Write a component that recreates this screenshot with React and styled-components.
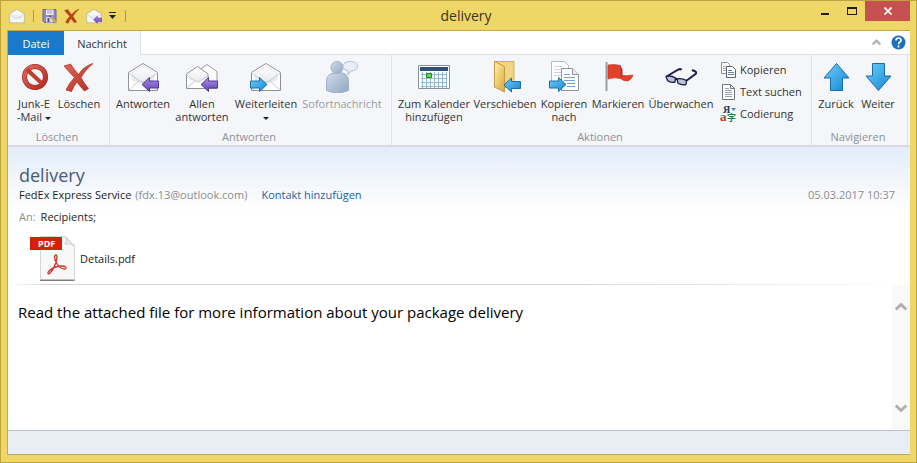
import React from "react"
import styled, { createGlobalStyle } from "styled-components"

const GlobalStyle = createGlobalStyle`
  * {
    box-sizing: border-box;
  }
  body {
    margin: 0;
    font-family: "Open Sans", "Noto Sans", sans-serif;
    font-size: 11px;
    color: #1c1c1c;
  }
  button {
    font: inherit;
    color: inherit;
    background: none;
    border: 0;
    padding: 0;
  }
`

const Window = styled.div`
  display: flex;
  flex-direction: column;
  min-height: 100vh;
  padding: 0 6px 7px 6px;
  background: #efd767;
  border: 1px solid #bda440;
`

const TitleBar = styled.header`
  display: flex;
  align-items: center;
  height: 29px;
  flex: none;
`

const QuickAccess = styled.div`
  display: flex;
  align-items: center;
  gap: 6px;
  width: 118px;
  padding-left: 2px;
`

const QuickButton = styled.button`
  display: flex;
  flex: none;
  width: ${(props) => props.$width || 16}px;
`

const QuickDivider = styled.span`
  flex: none;
  width: 1px;
  height: 12px;
  margin: 0 2px;
  background: #b39b45;
`

const Title = styled.h1`
  flex: 1;
  margin: 0;
  padding-right: 4px;
  text-align: center;
  font-size: 14px;
  font-weight: 400;
  line-height: 20px;
  color: #3a3520;
`

const WindowControls = styled.div`
  display: flex;
  align-self: flex-start;
`

const WindowButton = styled.button`
  display: flex;
  align-items: center;
  justify-content: center;
  width: ${(props) => (props.$close ? 45 : 27)}px;
  height: 20px;
  background: ${(props) => (props.$close ? "#c75050" : "transparent")};
`

const Content = styled.div`
  display: flex;
  flex-direction: column;
  flex: 1;
  border: 1px solid #c0a94e;
  border-right-width: 0;
  background: #fff;
`

const Tabs = styled.nav`
  display: flex;
  align-items: stretch;
  height: 24px;
  border-bottom: 1px solid #dcdfe4;
`

const Tab = styled.button`
  height: 24px;
  width: ${(props) => (props.$primary ? 56 : 77)}px;
  color: ${(props) => (props.$primary ? "#fff" : "#333")};
  background: ${(props) => (props.$primary ? "#1979ca" : "#f5f6f9")};
  border-right: ${(props) => (props.$primary ? "0" : "1px solid #dcdfe4")};
`

const TabTools = styled.div`
  display: flex;
  align-items: center;
  gap: 10px;
  margin-left: auto;
  padding-right: 4px;

  button {
    display: flex;
  }
`

const Ribbon = styled.div`
  display: flex;
  height: 92px;
  background: #f5f6f9;
  border-bottom: 2px solid #d6dae1;
`

const Group = styled.section`
  display: flex;
  flex-direction: column;
  justify-content: space-between;
  padding: 6px 7px 1px 4px;
  border-right: 1px solid #e0e2e6;
`

const GroupItems = styled.div`
  display: flex;
  align-items: flex-start;
`

const GroupName = styled.h2`
  margin: 0;
  text-align: center;
  font-size: 11px;
  font-weight: 400;
  line-height: 14px;
  color: #8d9096;
`

const RibbonButton = styled.button`
  display: flex;
  flex-direction: column;
  align-items: center;
  gap: 4px;
  width: ${(props) => props.$width}px;
  line-height: 13px;
  white-space: nowrap;
  color: ${(props) => (props.disabled ? "#989ba0" : "#333")};
`

const SmallList = styled.div`
  display: flex;
  flex-direction: column;
  width: 88px;
  padding-left: 4px;
`

const SmallButton = styled.button`
  display: flex;
  align-items: center;
  gap: 4px;
  height: 22px;
  padding-bottom: 5px;
  white-space: nowrap;
  color: #333;
`

const Caret = styled.span`
  display: inline-block;
  margin-left: ${(props) => (props.$spaced ? 3 : 0)}px;
  vertical-align: middle;
  border: 3px solid transparent;
  border-top-color: #222;
  border-bottom: 0;
`

const MessageHeader = styled.section`
  padding: 16px 15px 3px 11px;
  background: linear-gradient(#e3ecf8, #fff 64px);
`

const Subject = styled.h2`
  margin: 0;
  font-size: 18px;
  font-weight: 400;
  line-height: 24px;
  color: #475a78;
`

const Line = styled.div`
  display: flex;
  line-height: 16px;
  margin-bottom: 6px;
`

const Muted = styled.span`
  margin: 0 4px;
  color: #8d8d8d;
`

const Label = styled.span`
  margin-right: 5px;
  color: #8d8d8d;
`

const ContactLink = styled.a`
  margin-left: 10px;
  color: #1c62a5;
  text-decoration: none;
`

const DateText = styled.time`
  margin-left: auto;
  color: #8d8d8d;
`

const Attachment = styled.button`
  display: flex;
  align-items: center;
  gap: 4px;
  margin: 10px 0 0 11px;
`

const Divider = styled.hr`
  width: 100%;
  height: 1px;
  margin: 0;
  border: 0;
  background: linear-gradient(90deg, #fff, #d3d5d9 40px, #d3d5d9 60%, #fff);
`

const Body = styled.section`
  display: flex;
  flex: 1;
`

const BodyText = styled.p`
  flex: 1;
  margin: 0;
  padding: 16px 0 0 10px;
  font-size: 15px;
  line-height: 22px;
  color: #000;
`

const ScrollBar = styled.div`
  display: flex;
  flex-direction: column;
  justify-content: space-between;
  align-items: center;
  width: 18px;
  padding: 16px 0;
  background: #f9f9fa;

  button {
    display: flex;
  }
`

const StatusBar = styled.footer`
  height: 24px;
  background: #e9edf4;
  border-top: 1px solid #bcc1c8;
`

const Icon = ({ size = 32, children }) => (
  <svg width={size} height={size} viewBox="0 0 32 32" aria-hidden="true">
    {children}
  </svg>
)

const Gradients = () => (
  <svg width="0" height="0" style={{ position: "absolute" }} aria-hidden="true">
    <defs>
      <linearGradient id="blue" x1="0" y1="0" x2="1" y2="1">
        <stop offset="0" stopColor="#6fd0fa" />
        <stop offset="1" stopColor="#1483d2" />
      </linearGradient>
      <linearGradient id="purple" x1="0" y1="0" x2="0" y2="1">
        <stop offset="0" stopColor="#a78fe6" />
        <stop offset="1" stopColor="#6542b4" />
      </linearGradient>
      <linearGradient id="red" x1="0" y1="0" x2="1" y2="1">
        <stop offset="0" stopColor="#e2685c" />
        <stop offset="1" stopColor="#b22a1d" />
      </linearGradient>
      <linearGradient id="folder" x1="0" y1="0" x2="1" y2="1">
        <stop offset="0" stopColor="#fff0ac" />
        <stop offset="1" stopColor="#dca93c" />
      </linearGradient>
      <linearGradient id="person" x1="0" y1="0" x2="1" y2="1">
        <stop offset="0" stopColor="#d3dde9" />
        <stop offset="1" stopColor="#8fa6c4" />
      </linearGradient>
      <linearGradient id="paper" x1="0" y1="0" x2="0" y2="1">
        <stop offset="0" stopColor="#ffffff" />
        <stop offset="1" stopColor="#e6e8ec" />
      </linearGradient>
    </defs>
  </svg>
)

const Envelope = () => (
  <g stroke="#8f9196" strokeLinejoin="round">
    <path d="M1.5 11.5 16 2.5l14.5 9v18h-29z" fill="#fff" />
    <path d="M5 12 16 5l11 7v7l-11 3-11-3z" fill="url(#paper)" stroke="#e4e6e9" />
    <path d="m1.5 12 11 8q3.500 2 7 0l11-8M1.500 29.500 12 20m18.500 9.500L20 20" fill="none" stroke="#c5c8cc" />
  </g>
)

const LeftArrow = ({ fill, stroke }) => (
  <path d="M15 23.500 22.500 16.500v3.500h9v7h-9v3.500z" fill={fill} stroke={stroke} strokeLinejoin="round" />
)

const RightArrow = () => (
  <path d="M17 23.500 9.500 16.500v3.500h-9v7h9v3.500z" fill="url(#blue)" stroke="#1b6fa9" strokeLinejoin="round" />
)

const EnvelopeIcon = ({ size }) => (
  <Icon size={size}>
    <Envelope />
  </Icon>
)

const ReplyIcon = ({ size }) => (
  <Icon size={size}>
    <Envelope />
    <LeftArrow fill="url(#purple)" stroke="#54379b" />
  </Icon>
)

const ReplyAllIcon = () => (
  <Icon>
    <path d="m12 10 9-6.500 10 7v17H14z" fill="#fbfbfc" stroke="#9b9da2" />
    <path d="m.5 13 11-7.500 10.500 7.500v14.500H.5z" fill="#fff" stroke="#8f9196" />
    <path d="m3.500 13 8-5.500 8 5.500v5l-8 3-8-3z" fill="url(#paper)" />
    <path d="m.5 14 8 6q3 2 6 0l8-6M.5 27l8-6.500" fill="none" stroke="#c5c8cc" />
    <LeftArrow fill="url(#purple)" stroke="#54379b" />
  </Icon>
)

const ForwardIcon = () => (
  <Icon>
    <Envelope />
    <RightArrow />
  </Icon>
)

const JunkIcon = () => (
  <Icon>
    <circle cx="17" cy="16" r="10.5" fill="none" stroke="#8f2118" strokeWidth="5" />
    <circle cx="17" cy="16" r="10.5" fill="none" stroke="url(#red)" strokeWidth="4" />
    <path d="m9 8.500 16 15" stroke="#c03c2e" strokeWidth="4" />
  </Icon>
)

const DeleteIcon = ({ size, fill = "url(#red)", stroke = "#a8281c" }) => (
  <Icon size={size}>
    <path
      d="M1 5 7.500 3q4 6 8 10.500Q21 5 30 2.500 22 9 18 16.500q3 6 7.500 11l-4 2.500q-4-4-7.500-9-3.500 4-5.500 9.500L3 29q3-7 8.500-12.500-6-6-10.500-11.500z"
      fill={fill}
      stroke={stroke}
      strokeWidth="0.7"
    />
  </Icon>
)

const SaveIcon = () => (
  <Icon size={16}>
    <path d="M2 3h26v26H5l-3-3z" fill="#9488bd" stroke="#6d62a0" strokeWidth="2" />
    <path d="M8 3h15v11H8z" fill="#f4f1fa" />
    <path d="M10 6h11M10 10h11" stroke="#8580a0" strokeWidth="1.5" />
    <path d="M8 18h14v11H8z" fill="#d8d6e8" />
    <path d="M11 20h4v8h-4z" fill="#5a5385" />
    <path d="m17 17 12 13" stroke="#c9a95c" strokeWidth="4" />
    <path d="m15 15 3 3" stroke="#6a5d48" strokeWidth="3" />
  </Icon>
)

const MessengerIcon = () => (
  <Icon>
    <path d="M6 12.500q6-3 12 0 4.500 2 4.500 8v9q-11 4.500-22 0v-9q0-6 5.500-8z" fill="url(#person)" stroke="#9bb0ca" />
    <circle cx="11" cy="6.5" r="6" fill="url(#person)" stroke="#9bb0ca" />
    <path d="M24 .5c4.500 0 7.500 2 7.500 4.700S28.500 10 25 10l-3 4v-4.300c-3-.7-5-2.200-5-4.500C17 2.500 20 .5 24 .5z" fill="#e8eff7" stroke="#adbfd3" />
  </Icon>
)

const CalendarIcon = () => (
  <Icon>
    <path d="M.5 4.500h31v23H.5z" fill="#fff" stroke="#8a9099" />
    <path d="M2 6h28v4H2z" fill="#304e78" />
    <path d="M3 13.500h26M3 17.500h26M3 21.500h26M3 25.500h26M4.500 11v16M8.500 11v16M12.500 11v16M16.500 11v16M20.500 11v16M24.500 11v16M28.500 11v16" stroke="#8fb9d6" />
    <path d="M8.500 12.500h5v4h-5z" fill="#68d552" stroke="#228b20" />
  </Icon>
)

const MoveIcon = () => (
  <Icon>
    <path d="M6 .5h19v26H6z" fill="#f0d682" stroke="#d3ac52" />
    <path d="m5.500.5 10 5v25.500l-10-5z" fill="url(#folder)" stroke="#c79d43" />
    <g transform="translate(0 .5)">
      <LeftArrow fill="url(#blue)" stroke="#1b6fa9" />
    </g>
  </Icon>
)

const CopyToIcon = () => (
  <Icon>
    <path d="M3.500.5h13l4 4v20h-17z" fill="#fff" stroke="#b5b9c0" />
    <path d="M6 5.500h9M6 8.500h8M6 11.500h8M6 14.500h8" stroke="#d3d7dd" />
    <path d="M13.500 7.500h11l6 6v16h-17z" fill="#fff" stroke="#8d929b" />
    <path d="M24.500 7.500v6h6" fill="#eceef2" stroke="#8d929b" />
    <path d="M16 13.500h6M16 16.500h11M16 19.500h11M19 22.500h8M19 25.500h8" stroke="#7b9fc6" />
    <g transform="translate(1 0)">
      <RightArrow />
    </g>
  </Icon>
)

const FlagIcon = () => (
  <Icon>
    <path d="M4.500 1v29" stroke="#9a9ca2" strokeWidth="2" />
    <path d="M6 4q6-1 12.500.5V14q6 1.500 12.500 0-1 4-5 6-5 0-7.500-2.500Q12 16 6 18z" fill="#e0412b" stroke="#c43422" strokeWidth="0.7" />
    <path d="m18.500 5 2 3v6.500l-2 3z" fill="#b9301f" />
  </Icon>
)

const GlassesIcon = () => (
  <Icon>
    <path d="m1.500 15.500 12-7q2-1 3 .5M21 20l9.500-7q1.500-1.500 0-2.500L27 9" fill="none" stroke="#20204c" strokeWidth="2" />
    <path d="M1 15.500q5-1.500 9.500 1.500l-.5 4q-4.500 1-7.500-1.500zM12 18q5-1 9.500 1.500l-.5 4q-4.500 1-8-1.300z" fill="#b9c2d6" stroke="#1c1d45" strokeWidth="1.3" strokeLinejoin="round" />
    <path d="m10 17.500 2.500.8" stroke="#1c1d45" strokeWidth="2" />
  </Icon>
)

const CopyIcon = () => (
  <svg width="16" height="16" viewBox="0 0 16 16" aria-hidden="true">
    <path d="M1.500.5h6l2 2v9h-8z" fill="#fff" stroke="#8e9299" />
    <path d="M3 4.500h3M3 6.500h3M3 8.500h3" stroke="#98aac2" />
    <path d="M6.500 4.500h6l3 3v8h-9z" fill="#fff" stroke="#60656f" />
    <path d="M8 8.500h4M8 10.500h6M8 12.500h6" stroke="#5f86b5" />
  </svg>
)

const TextIcon = () => (
  <svg width="16" height="16" viewBox="0 0 16 16" aria-hidden="true">
    <path d="M2.500.5h8l4 4v11h-12z" fill="#fff" stroke="#6f747d" />
    <path d="M10.500.5v4h4" fill="none" stroke="#6f747d" />
    <path d="M5 4.500h4M5 6.500h7M5 8.500h7M5 10.500h7M5 12.500h7" stroke="#9aa0aa" />
  </svg>
)

const EncodingIcon = () => (
  <svg width="16" height="16" viewBox="0 0 16 16" overflow="visible" aria-hidden="true">
    <text x="3" y="7" fontFamily="Liberation Serif, serif" fontSize="10" fontWeight="700" fill="#26344d">Я</text>
    <text x="0" y="15" fontFamily="Liberation Serif, serif" fontSize="13" fontWeight="700" fill="#c33a2c">a</text>
    <text x="7" y="15" fontFamily="Noto Sans CJK SC, sans-serif" fontSize="9" fontWeight="700" fill="#2f7d3a">字</text>
    <path d="M11 2h5l-2.500 3z" fill="#3d86c4" />
  </svg>
)

const VerticalArrowIcon = ({ down }) => (
  <Icon>
    <path
      d={down ? "M10.500 2.500h12v12.500h6.500L16.500 29.500 4 15h6.500z" : "M10.500 29.500h12v-12.500h6.500L16.500 2.500 4 17h6.500z"}
      fill="url(#blue)"
      stroke="#1a6dab"
      strokeLinejoin="round"
    />
  </Icon>
)

const Chevron = ({ down, width = 12 }) => (
  <svg width={width} height={width} viewBox="0 0 12 12" aria-hidden="true">
    <path d={down ? "m.8 3.500 5.200 5 5.200-5" : "m.8 8.500 5.200-5 5.200 5"} fill="none" stroke="#b0b0b2" strokeWidth="3" />
  </svg>
)

const PdfIcon = () => (
  <svg width="46" height="46" viewBox="0 0 46 46" aria-hidden="true">
    <path d="M10.500 1.500h25l9 9v34h-34z" fill="#f8f8f9" stroke="#d5d6d8" />
    <path d="M35.500 1.500q2 6-1 7.500 6-1 10 2z" fill="#e6e7e9" stroke="#cfd0d2" />
    <path d="M10 45.500h34.500" stroke="#77797c" strokeWidth="1.5" />
    <path d="M0 2h32v13H0z" fill="#d91f0b" />
    <text x="8" y="12" fontFamily="Open Sans, sans-serif" fontSize="9" fontWeight="700" fill="#fff">PDF</text>
    <path
      d="M26 20c-2 0-2 4 1 9 2 3 5 5 8 5 2-1 1-3-3-3-5 0-10 2-13 5-2 2-1 4 1 2 3-3 6-10 7-15 0-2 0-3-1-3z"
      fill="none"
      stroke="#cf3328"
      strokeWidth="1.3"
    />
  </svg>
)

const HelpIcon = () => (
  <svg width="15" height="15" viewBox="0 0 15 15" aria-hidden="true">
    <circle cx="7.5" cy="7.5" r="7" fill="#1e6fba" />
    <path d="M5 5.500q0-2.500 2.500-2.500T10 5.300q0 1.200-1.300 2Q7.500 8 7.500 9.200M7.500 10.500v2" fill="none" stroke="#fff" strokeWidth="1.7" />
  </svg>
)

const App = () => {
  return (
    <Window>
      <GlobalStyle />
      <Gradients />
      <TitleBar>
        <QuickAccess>
          <QuickButton aria-label="Nachricht">
            <EnvelopeIcon size={16} />
          </QuickButton>
          <QuickDivider />
          <QuickButton aria-label="Speichern">
            <SaveIcon />
          </QuickButton>
          <QuickButton aria-label="Löschen">
            <DeleteIcon size={16} fill="#b5421a" stroke="#96330f" />
          </QuickButton>
          <QuickButton aria-label="Antworten">
            <ReplyIcon size={16} />
          </QuickButton>
          <QuickButton $width={9} aria-label="Anpassen">
            <svg width="9" height="9" viewBox="0 0 9 9" aria-hidden="true">
              <path d="M1 1.500h7" stroke="#222" />
              <path d="M1 4h7L4.500 8z" fill="#222" />
            </svg>
          </QuickButton>
          <QuickDivider />
        </QuickAccess>
        <Title>delivery</Title>
        <WindowControls>
          <WindowButton aria-label="Minimieren">
            <svg width="10" height="10" viewBox="0 0 10 10" aria-hidden="true">
              <path d="M1 8h8" stroke="#221e10" strokeWidth="2" />
            </svg>
          </WindowButton>
          <WindowButton aria-label="Maximieren">
            <svg width="10" height="8" viewBox="0 0 10 8" aria-hidden="true">
              <path d="M0 0h10v8H0zM1 2v5h8V2z" fill="#221e10" fillRule="evenodd" />
            </svg>
          </WindowButton>
          <WindowButton $close aria-label="Schließen">
            <svg width="8" height="8" viewBox="0 0 8 8" aria-hidden="true">
              <path d="m.5.5 7 7m0-7-7 7" stroke="#fff" strokeWidth="1.7" />
            </svg>
          </WindowButton>
        </WindowControls>
      </TitleBar>

      <Content>
        <Tabs>
          <Tab $primary>Datei</Tab>
          <Tab>Nachricht</Tab>
          <TabTools>
            <button aria-label="Menüband minimieren">
              <Chevron width={9} />
            </button>
            <button aria-label="Hilfe">
              <HelpIcon />
            </button>
          </TabTools>
        </Tabs>

        <Ribbon>
          <Group>
            <GroupItems>
              <RibbonButton $width={44}>
                <JunkIcon />
                <span>
                  Junk-E
                  <br />
                  -Mail
                  <Caret $spaced />
                </span>
              </RibbonButton>
              <RibbonButton $width={46}>
                <DeleteIcon />
                Löschen
              </RibbonButton>
            </GroupItems>
            <GroupName>Löschen</GroupName>
          </Group>

          <Group>
            <GroupItems>
              <RibbonButton $width={58}>
                <ReplyIcon />
                Antworten
              </RibbonButton>
              <RibbonButton $width={60}>
                <ReplyAllIcon />
                <span>
                  Allen
                  <br />
                  antworten
                </span>
              </RibbonButton>
              <RibbonButton $width={68}>
                <ForwardIcon />
                <span>
                  Weiterleiten
                  <br />
                  <Caret />
                </span>
              </RibbonButton>
              <RibbonButton $width={84} disabled>
                <MessengerIcon />
                Sofortnachricht
              </RibbonButton>
            </GroupItems>
            <GroupName>Antworten</GroupName>
          </Group>

          <Group>
            <GroupItems>
              <RibbonButton $width={76}>
                <CalendarIcon />
                <span>
                  Zum Kalender
                  <br />
                  hinzufügen
                </span>
              </RibbonButton>
              <RibbonButton $width={66}>
                <MoveIcon />
                Verschieben
              </RibbonButton>
              <RibbonButton $width={52}>
                <CopyToIcon />
                <span>
                  Kopieren
                  <br />
                  nach
                </span>
              </RibbonButton>
              <RibbonButton $width={56}>
                <FlagIcon />
                Markieren
              </RibbonButton>
              <RibbonButton $width={70}>
                <GlassesIcon />
                Überwachen
              </RibbonButton>
              <SmallList>
                <SmallButton>
                  <CopyIcon />
                  Kopieren
                </SmallButton>
                <SmallButton>
                  <TextIcon />
                  Text suchen
                </SmallButton>
                <SmallButton>
                  <EncodingIcon />
                  Codierung
                </SmallButton>
              </SmallList>
            </GroupItems>
            <GroupName>Aktionen</GroupName>
          </Group>

          <Group>
            <GroupItems>
              <RibbonButton $width={40}>
                <VerticalArrowIcon />
                Zurück
              </RibbonButton>
              <RibbonButton $width={44}>
                <VerticalArrowIcon down />
                Weiter
              </RibbonButton>
            </GroupItems>
            <GroupName>Navigieren</GroupName>
          </Group>
        </Ribbon>

        <MessageHeader>
          <Subject>delivery</Subject>
          <Line>
            <span>FedEx Express Service</span>
            <Muted>(fdx.13@outlook.com)</Muted>
            <ContactLink href="#kontakt">Kontakt hinzufügen</ContactLink>
            <DateText>05.03.2017 10:37</DateText>
          </Line>
          <Line>
            <Label>An:</Label>
            <span>Recipients;</span>
          </Line>
          <Attachment>
            <PdfIcon />
            Details.pdf
          </Attachment>
        </MessageHeader>
        <Divider />

        <Body>
          <BodyText>Read the attached file for more information about your package delivery</BodyText>
          <ScrollBar>
            <button aria-label="Nach oben">
              <Chevron />
            </button>
            <button aria-label="Nach unten">
              <Chevron down />
            </button>
          </ScrollBar>
        </Body>
        <StatusBar />
      </Content>
    </Window>
  )
}

export default App
